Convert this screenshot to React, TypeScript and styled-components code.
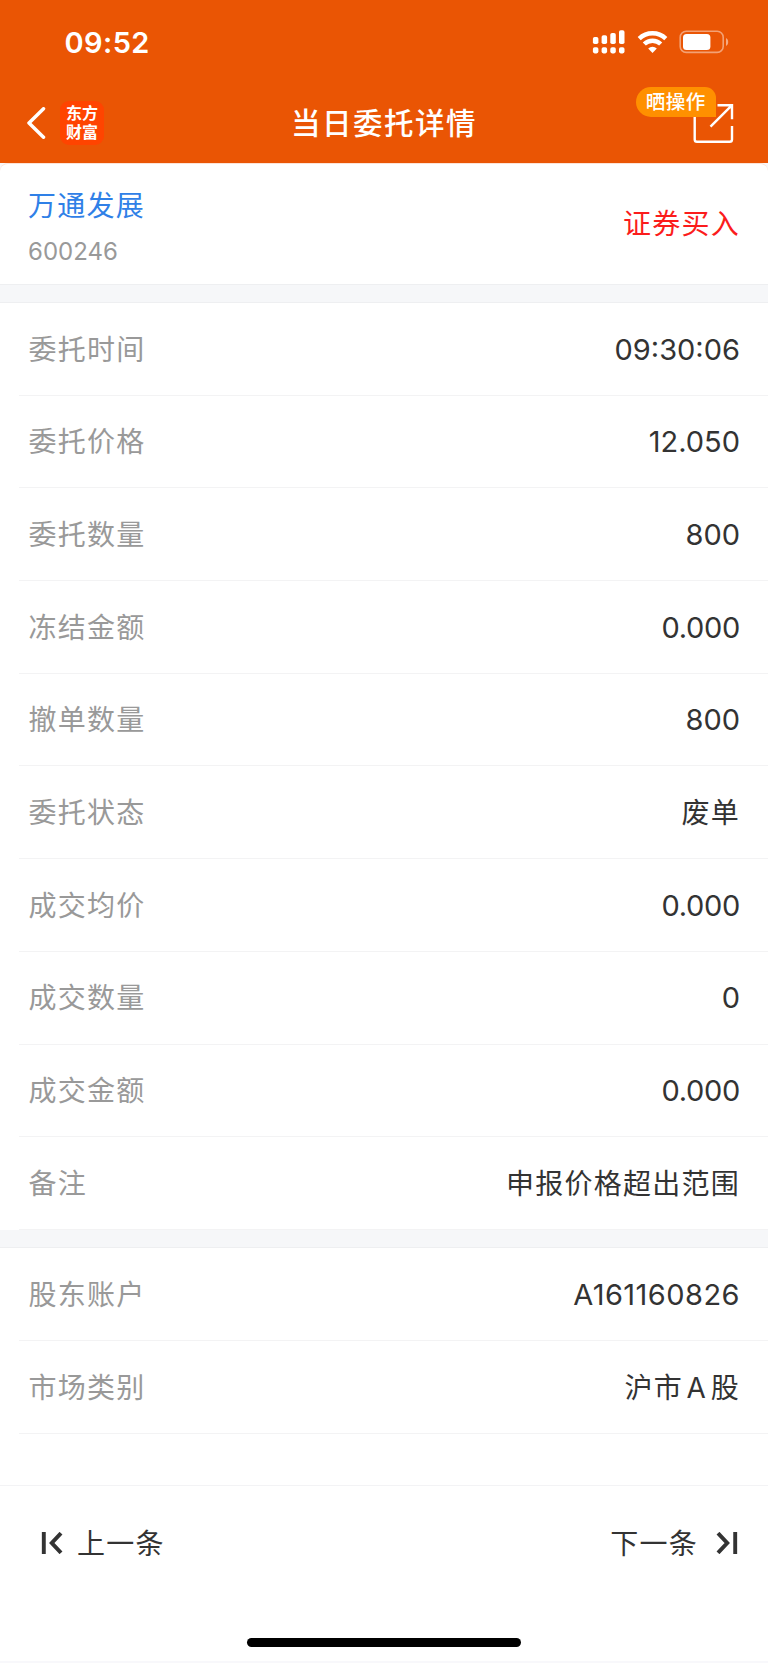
import React from 'react';
import styled, { createGlobalStyle } from 'styled-components';

const GlobalStyle = createGlobalStyle`
  * { box-sizing: border-box; }
  body { margin: 0; background: #fff; font-family: Inter, "Noto Sans CJK SC", sans-serif; }
`;

const Page = styled.div`
  display: flex;
  flex-direction: column;
  width: 768px;
  height: 1663px;
  background: #f8f8fb;
  overflow: hidden;
`;

const Header = styled.header`
  height: 163px;
  flex: none;
  background: #ea5504;
  color: #fff;
`;

const StatusBar = styled.div`
  display: flex;
  align-items: center;
  justify-content: space-between;
  height: 84px;
  padding: 0 39px 0 64.5px;
`;

const Clock = styled.span`
  font-size: 29px;
  font-weight: 580;
  line-height: 34px;
  letter-spacing: 0.4px;
  padding-top: 1px;
`;

const NavBar = styled.div`
  display: grid;
  grid-template-columns: 1fr auto 1fr;
  align-items: center;
  height: 78px;
  padding: 0 34px 0 26px;
`;

const NavLeft = styled.div`
  display: flex;
  align-items: center;
  gap: 14px;
`;

const Logo = styled.div`
  width: 44px;
  height: 44px;
  padding-top: 2.5px;
  border-radius: 9px;
  background: #ff4400;
  font: 700 16px/19px "Noto Sans CJK SC", sans-serif;
  text-align: center;
  margin-top: -1px;
`;

const Title = styled.h1`
  margin: 0 -4px 0 4px;
  font-size: 29.5px;
  font-weight: 500;
  line-height: 44px;
  letter-spacing: 1.5px;
`;

const Share = styled.div`
  position: relative;
  justify-self: end;
  width: 41px;
  height: 42px;
  svg { display: block; }
`;

const Badge = styled.span`
  position: absolute;
  right: 18px;
  top: -15px;
  width: 80px;
  height: 30px;
  border-radius: 15px 11px 0 15px;
  background: #ff9000;
  font-size: 19.5px;
  font-weight: 500;
  line-height: 31px;
  letter-spacing: 0.5px;
  text-align: center;
  text-indent: -0.5px;
  white-space: nowrap;
`;

const Summary = styled.section`
  display: flex;
  justify-content: space-between;
  height: 121.5px;
  flex: none;
  padding: 22px 28px 0;
  background: #fff;
  border-radius: 8px 8px 0 0;
  border-top: 1px solid #fde3d6;
  border-bottom: 1px solid #eeeff1;
`;

const StockName = styled.div`
  color: #2f80e7;
  font-size: 28px;
  line-height: 40px;
  letter-spacing: 1.25px;
`;

const StockCode = styled.div`
  color: #999;
  font-size: 24px;
  line-height: 30px;
  margin-top: 11px;
`;

const Side = styled.div`
  color: #fb1c1c;
  font-size: 28px;
  line-height: 40px;
  letter-spacing: 1.25px;
  margin-top: 18px;
`;

const Gap = styled.div`
  height: 18.5px;
  flex: none;
  background: #f6f7f9;
  border-bottom: 1.5px solid #eeeff1;
`;

const List = styled.section`
  flex: none;
  padding-left: 18.5px;
  background: #fff;
`;

const Row = styled.div`
  display: flex;
  align-items: center;
  justify-content: space-between;
  height: 92.7px;
  padding: 0 28px 0 10px;
  border-bottom: 1px solid #f3f3f4;
`;

const Label = styled.span`
  color: #999;
  font-size: 28px;
  line-height: 40px;
  letter-spacing: 1.25px;
  margin-top: 1.5px;
`;

const Value = styled.span<{ $latin?: boolean; $tracking?: number }>`
  color: #333;
  font-size: ${p => (p.$latin ? 29 : 28)}px;
  line-height: 40px;
  letter-spacing: ${p => p.$tracking ?? (p.$latin ? 0 : 1.25)}px;
  word-spacing: ${p => (p.$latin ? 0 : -5.5)}px;
  margin-top: 1.5px;
`;

const Footer = styled.footer`
  display: flex;
  flex-direction: column;
  justify-content: space-between;
  align-items: center;
  height: 176px;
  flex: none;
  padding-bottom: 14px;
  background: #fff;
  border-top: 1px solid #f3f3f5;
`;

const Spacer = styled.div`
  height: 51.5px;
  flex: none;
  background: #fff;
`;

const Pager = styled.nav`
  display: flex;
  align-items: center;
  justify-content: space-between;
  width: 100%;
  height: 115px;
  padding: 0 30px 0 41px;
`;

const PagerButton = styled.button<{ $gap: number }>`
  display: flex;
  align-items: center;
  gap: ${p => p.$gap}px;
  padding: 0;
  border: 0;
  background: none;
  color: #333;
  font: 400 28px/40px Inter, "Noto Sans CJK SC", sans-serif;
  letter-spacing: 1.25px;
  svg { margin-top: -1px; }
`;

const HomeIndicator = styled.div`
  width: 274.5px;
  height: 9.5px;
  border-radius: 5px;
  background: #000;
`;

const StatusIcons = () => (
  <svg width="137" height="26" viewBox="592 29 137 26" fill="#fff">
    {[37, 35.3, 33, 30.3].map((top, i) => (
      <g key={top}>
        <rect x={592.9 + i * 8.7} y={top} width="5.5" height={44 - top} rx="1.8" />
        <rect x={592.9 + i * 8.7} y="47.2" width="5.5" height="6.2" rx="1.8" />
      </g>
    ))}
    <g fill="none" stroke="#fff" strokeWidth="4.4">
      <path d="M639.2 38.6a19.2 19.2 0 0 1 26.6 0" />
      <path d="M644.3 44a11.8 11.8 0 0 1 16.4 0" />
    </g>
    <path d="M652.5 53l-4.3-4.4a6.2 6.2 0 0 1 8.6 0z" />
    <rect x="680.2" y="31.2" width="43" height="21.2" rx="6" fill="none" stroke="#fff" strokeOpacity=".45" strokeWidth="1.6" />
    <rect x="683" y="34" width="27.4" height="16" rx="3.5" />
    <path d="M726 38v8c1.4-.7 2.2-2.2 2.2-4s-.8-3.3-2.2-4z" opacity=".5" />
  </svg>
);

const BackIcon = () => (
  <svg width="20" height="32" viewBox="0 0 20 32" fill="none" stroke="#fff" strokeWidth="3.5" strokeLinecap="round" strokeLinejoin="round">
    <path d="M17.5 1.8L3 16l14.5 14.2" />
  </svg>
);

const ShareIcon = () => (
  <svg width="41" height="42" viewBox="693 102 41 42" fill="none" stroke="#fff" strokeWidth="2.4">
    <path d="M694.7 108v31.5q0 2.3 2.3 2.3h32.7q2.3 0 2.3-2.3v-13.5" />
    <path d="M717.5 105.2h14.5v14M731.5 105.7l-21 21" />
  </svg>
);

const PreviousIcon = () => (
  <svg width="22" height="22" viewBox="0 0 22 22" fill="none" stroke="#333">
    <path d="M2.8 0v22" strokeWidth="3.9" />
    <path d="M20 1.2L10.8 11l9.2 9.8" strokeWidth="4" />
  </svg>
);

const NextIcon = () => (
  <svg width="22" height="22" viewBox="0 0 22 22" fill="none" stroke="#333">
    <path d="M19.2 0v22" strokeWidth="3.9" />
    <path d="M2 1.2L11.2 11L2 20.8" strokeWidth="4" />
  </svg>
);

interface Detail {
  label: string;
  value: string;
  tracking?: number;
}

const orderRows: Detail[] = [
  { label: '委托时间', value: '09:30:06' },
  { label: '委托价格', value: '12.050' },
  { label: '委托数量', value: '800' },
  { label: '冻结金额', value: '0.000', tracking: -0.3 },
  { label: '撤单数量', value: '800' },
  { label: '委托状态', value: '废单' },
  { label: '成交均价', value: '0.000', tracking: -0.3 },
  { label: '成交数量', value: '0' },
  { label: '成交金额', value: '0.000', tracking: -0.3 },
  { label: '备注', value: '申报价格超出范围' },
];

const accountRows: Detail[] = [
  { label: '股东账户', value: 'A161160826', tracking: 0.45 },
  { label: '市场类别', value: '沪市 A 股' },
];

const Details = ({ rows }: { rows: Detail[] }) => (
  <List>
    {rows.map(({ label, value, tracking }) => (
      <Row key={label}>
        <Label>{label}</Label>
        <Value $latin={/^[\x00-\x7f]+$/.test(value)} $tracking={tracking}>{value}</Value>
      </Row>
    ))}
  </List>
);

export default function App() {
  return (
    <Page>
      <GlobalStyle />
      <Header>
        <StatusBar>
          <Clock>09:52</Clock>
          <StatusIcons />
        </StatusBar>
        <NavBar>
          <NavLeft>
            <BackIcon />
            <Logo>东方<br />财富</Logo>
          </NavLeft>
          <Title>当日委托详情</Title>
          <Share>
            <ShareIcon />
            <Badge>晒操作</Badge>
          </Share>
        </NavBar>
      </Header>
      <Summary>
        <div>
          <StockName>万通发展</StockName>
          <StockCode>600246</StockCode>
        </div>
        <Side>证券买入</Side>
      </Summary>
      <Gap />
      <Details rows={orderRows} />
      <Gap />
      <Details rows={accountRows} />
      <Spacer />
      <Footer>
        <Pager>
          <PagerButton $gap={14}>
            <PreviousIcon />
            上一条
          </PagerButton>
          <PagerButton $gap={18}>
            下一条
            <NextIcon />
          </PagerButton>
        </Pager>
        <HomeIndicator />
      </Footer>
    </Page>
  );
}
